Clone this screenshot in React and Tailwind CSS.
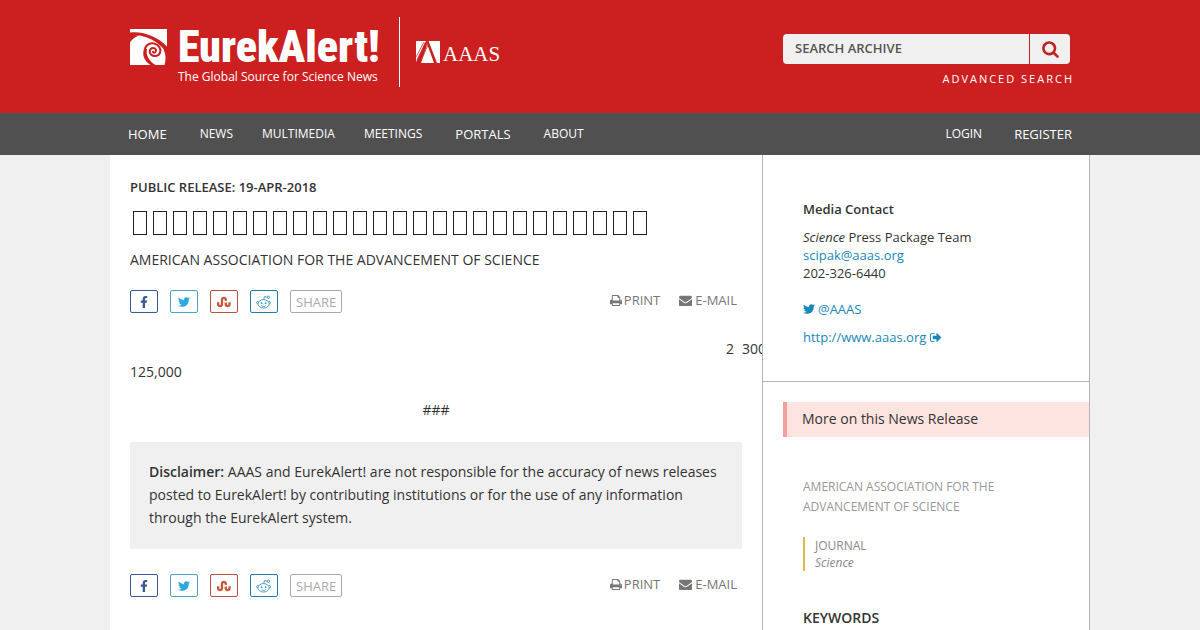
import React from 'react';
import { FaFacebookF, FaTwitter, FaStumbleupon } from 'react-icons/fa';

const navItems = [
  { label: 'HOME', className: 'text-[13px]' },
  { label: 'NEWS', className: 'mr-[-4px] text-[12px]' },
  { label: 'MULTIMEDIA', className: 'mr-[-4px] text-[12px]' },
  { label: 'MEETINGS', className: 'text-[12px]' },
  { label: 'PORTALS', className: 'text-[13px]' },
  { label: 'ABOUT', className: 'text-[12px]' },
];

// The headline is shown as a row of empty glyph boxes
const HEADLINE_LENGTH = 26;

function PrintIcon() {
  return (
    <svg viewBox="0 0 1664 1792" className="h-[13px] w-3" fill="currentColor" aria-hidden="true">
      <path fillRule="evenodd" d="M384 1536h896v-256h-896v256zM384 896h896v-384h-160q-40 0-68-28t-28-68v-160h-640v640zM1536 960q0-26-19-45t-45-19-45 19-19 45 19 45 45 19 45-19 19-45zM1664 960v416q0 13-9.5 22.5t-22.5 9.5h-224v160q0 40-28 68t-68 28h-960q-40 0-68-28t-28-68v-160h-224q-13 0-22.5-9.5t-9.500-22.500v-416q0-79 56.500-135.500t135.500-56.500h64v-544q0-40 28-68t68-28h672q40 0 88 20t76 48l152 152q28 28 48 76t20 88v256h64q79 0 135.500 56.500t56.500 135.500z" />
    </svg>
  );
}

function MailIcon() {
  return (
    <svg viewBox="0 0 1792 1792" className="h-[13px] w-[13px]" fill="currentColor" aria-hidden="true">
      <path d="M1792 710v794q0 66-47 113t-113 47h-1472q-66 0-113-47t-47-113v-794q44 49 101 87 362 246 497 345 57 42 92.5 65.5t94.5 48 110 24.5h2q51 0 110-24.5t94.5-48 92.5-65.5q170-123 498-345 57-39 100-87zM1792 416q0 79-49 151t-122 123q-376 261-468 325-10 7-42.5 31t-54 38.5-52 32.5-57.5 27-50 9h-2q-23 0-50-9t-57.5-27-52-32.5-54-38.5-42.5-31q-91-64-262-182.5t-205-142.5q-62-42-117-115.5t-55-136.5q0-78 41.5-130t118.5-52h1472q65 0 112.5 47t47.5 113z" />
    </svg>
  );
}

function SignOutIcon() {
  return (
    <svg viewBox="0 0 1664 1792" className="h-[13px] w-3" fill="currentColor" aria-hidden="true">
      <path d="M640 1440q0 4 1 20t.5 26.5-3 23.5-10 19.5-20.5 6.5h-320q-119 0-203.5-84.5t-84.5-203.5v-704q0-119 84.5-203.5t203.5-84.5h320q13 0 22.5 9.5t9.5 22.5q0 4 1 20t.5 26.5-3 23.5-10 19.5-20.5 6.5h-320q-66 0-113 47t-47 113v704q0 66 47 113t113 47h312l11.5 1 11.5 3 8 5.5 7 9 2 13.5zM1568 896q0 26-19 45l-544 544q-19 19-45 19t-45-19-19-45v-288h-448q-26 0-45-19t-19-45v-384q0-26 19-45t45-19h448v-288q0-26 19-45t45-19 45 19l544 544q19 19 19 45z" />
    </svg>
  );
}

function SearchIcon() {
  return (
    <svg viewBox="0 0 1664 1792" className="h-[18px] w-[17px]" fill="currentColor" aria-hidden="true">
      <path fillRule="evenodd" d="M1152 832q0-185-131.5-316.5t-316.5-131.5-316.5 131.5-131.5 316.5 131.5 316.5 316.5 131.5 316.5-131.5 131.5-316.5zM1664 1664q0 52-38 90t-90 38q-54 0-90-38l-343-342q-179 124-399 124-143 0-273.5-55.5t-225-150-150-225-55.5-273.5 55.5-273.5 150-225 225-150 273.5-55.5 273.5 55.5 225 150 150 225 55.5 273.5q0 220-124 399l343 343q37 37 37 90z" />
    </svg>
  );
}

function RedditIcon() {
  return (
    <svg viewBox="0 0 16 14" className="h-[14px] w-4" fill="none" stroke="currentColor" strokeWidth="0.9" aria-hidden="true">
      <ellipse cx="7.6" cy="8.8" rx="5.6" ry="4.2" />
      <path d="M2.6 6.9C1.8 5.9.6 6.6.7 7.7c0 .7.5 1.2 1.2 1.4M12.6 6.9c.8-1 2-.3 1.9.8 0 .7-.5 1.2-1.2 1.4" />
      <path d="M7.7 4.6l.8-3 2.7.6" />
      <circle cx="12.4" cy="2.3" r="1.2" />
      <path d="M5.4 10.7c1.2 1 3.2 1 4.4 0" />
      <circle cx="5.6" cy="8.2" r="0.9" fill="currentColor" stroke="none" />
      <circle cx="9.6" cy="8.2" r="0.9" fill="currentColor" stroke="none" />
    </svg>
  );
}

function Logo() {
  return (
    <div className="flex items-start pt-[17px] text-white">
      <svg viewBox="0 0 37 37" className="mt-[11px] h-[37px] w-[37px]" aria-hidden="true">
        <path fill="#fff" d="M0 1H37V37H0Z" />
        <path fill="#cc2020" d="M0 4.500C11 3 26 7 37 18.500V25C28 13 16 6.500 0 6.800ZM0 6.500L9 7.500C5 9 2 11 0 14.500Z" />
        <path fill="#cc2020" d="M37 22V37H34.500C36 32 36 27 34 22.500L33 19ZM14.500 20C11.500 26 14 33 20.500 37H25.500C19 33 15.500 27 17 21Z" />
        <path
          fill="none"
          stroke="#cc2020"
          strokeWidth="2"
          strokeLinecap="round"
          d="M15 24C14 18 19 14.500 24 15.500C29 16.500 31.500 21 30 25C28.500 28.500 23.500 29 21 26.500C18.500 24 20 20 23 20C26 20 27 23 25 24.500C24 25.200 23 24.500 23 23.800"
        />
      </svg>
      <div className="ml-[11px] w-[202px]">
        <div className="mt-[7px] font-['Roboto_Condensed','DejaVu_Sans_Condensed',sans-serif] text-[44px] leading-[46px] font-black">
          EurekAlert!
        </div>
        <div className="text-[12px] leading-[14px] whitespace-nowrap">The Global Source for Science News</div>
      </div>
      <div className="ml-[19px] h-[70px] w-px bg-white"></div>
      <div className="mt-[23px] ml-4 flex items-end gap-[2px]">
        <svg viewBox="0 0 25 23" className="h-[23px] w-[25px]" aria-hidden="true">
          <path fill="#fff" d="M0 1H10L0 22ZM10 1l8 22H5L11 5ZM12.5 1H24V23H21Z" />
          <path stroke="#cc2020" strokeWidth="0.7" d="M11 2L2 23M9.5 2L1 20M12 5L4 23M8 2L0 17" />
        </svg>
        <span className="font-['Liberation_Serif',serif] text-[21px] leading-[18px]">AAAS</span>
      </div>
    </div>
  );
}

function ShareBar() {
  const button = 'flex h-[23px] w-7 items-center justify-center rounded-xs border';
  return (
    <div className="flex items-start justify-between">
      <div className="flex items-center gap-3">
        <button className={`${button} border-[#3b5998] text-[#3b5998]`} aria-label="Facebook">
          <FaFacebookF className="h-3 w-3" />
        </button>
        <button className={`${button} border-[#4aa5c8] text-[#2ba9e0]`} aria-label="Twitter">
          <FaTwitter className="h-3 w-3" />
        </button>
        <button className={`${button} border-[#b9503c] text-[#cb5638]`} aria-label="StumbleUpon">
          <FaStumbleupon className="h-[14px] w-[14px]" />
        </button>
        <button className={`${button} border-[#1f7fa8] text-[#3a94bd]`} aria-label="Reddit">
          <RedditIcon />
        </button>
        <button className="h-[23px] rounded-xs border border-[#aaa] px-[5px] text-[13px] leading-5 text-[#aaa]">
          SHARE
        </button>
      </div>
      <div className="flex items-center gap-[19px] pr-[5px] text-[13px] leading-5 text-[#777]">
        <a href="#print" className="flex items-center gap-[2px]">
          <PrintIcon />
          PRINT
        </a>
        <a href="#email" className="flex items-center gap-[3px]">
          <MailIcon />
          E-MAIL
        </a>
      </div>
    </div>
  );
}

function Header() {
  return (
    <header className="bg-[#cc2020]">
      <div className="mx-auto flex h-[113px] max-w-[980px] justify-between px-5">
        <Logo />
        <div className="pt-[34px]">
          <form className="flex h-[30px] w-[287px] gap-px" onSubmit={(e) => e.preventDefault()}>
            <input
              type="text"
              aria-label="Search archive"
              placeholder="SEARCH ARCHIVE"
              className="min-w-0 flex-1 rounded-l-sm bg-[#f0f0f0] px-3 text-[13px] font-semibold text-[#555] placeholder:text-[#555]"
            />
            <button
              type="submit"
              aria-label="Search"
              className="flex w-10 items-center justify-center rounded-r-sm bg-[#f0f0f0] text-[#bf2222]"
            >
              <SearchIcon />
            </button>
          </form>
          <div className="-mr-1 mt-[7px] text-right text-[11px] leading-4 tracking-[2px] text-white">
            <a href="#advanced">ADVANCED SEARCH</a>
          </div>
        </div>
      </div>
    </header>
  );
}

function Nav() {
  return (
    <nav className="bg-[#505050] text-white">
      <div className="mx-auto flex h-[42px] max-w-[980px] items-center justify-between px-[18px] leading-5">
        <div className="flex gap-[33px]">
          {navItems.map((item) => (
            <a key={item.label} href="#nav" className={item.className}>
              {item.label}
            </a>
          ))}
        </div>
        <div className="flex gap-8">
          <a href="#login" className="text-[12px]">LOGIN</a>
          <a href="#register" className="text-[13px]">REGISTER</a>
        </div>
      </div>
    </nav>
  );
}

function Sidebar() {
  return (
    <aside className="w-[328px] shrink-0 border-x border-[#b5b5b5]">
      <div className="border-b border-[#b5b5b5] px-10 pt-[45px] pb-[35px] text-[13px] leading-[18px]">
        <h2 className="mb-[10px] font-semibold">Media Contact</h2>
        <p>
          <em>Science</em> Press Package Team
        </p>
        <p>
          <a href="#mail" className="text-[#1a87b9]">scipak@aaas.org</a>
        </p>
        <p>202-326-6440</p>
        <p className="mt-[18px] text-[#1a87b9]">
          <a href="#twitter" className="flex items-center gap-[3px]">
            <FaTwitter className="h-3 w-3" />
            @AAAS
          </a>
        </p>
        <p className="mt-[10px] text-[#1a87b9]">
          <a href="#aaas" className="flex items-center gap-1">
            http://www.aaas.org
            <SignOutIcon />
          </a>
        </p>
      </div>
      <h3 className="mt-5 ml-5 border-l-4 border-[#f2a09b] bg-[#fde4e0] pt-[5px] pb-[7px] pl-[15px] text-[14px] leading-[23px]">
        More on this News Release
      </h3>
      <div className="px-10 pt-10">
        <p className="text-[12px] leading-5 text-[#999]">AMERICAN ASSOCIATION FOR THE ADVANCEMENT OF SCIENCE</p>
        <div className="mt-5 border-l-2 border-[#e0b84c] pl-[10px] text-[12px] leading-[17px] text-[#888]">
          <p>JOURNAL</p>
          <p className="italic">Science</p>
        </div>
        <h4 className="mt-[35px] text-[14px] leading-[23px] font-semibold">KEYWORDS</h4>
      </div>
    </aside>
  );
}

function Article() {
  return (
    <main className="min-w-0 flex-1 overflow-hidden px-5 pt-[22px]">
      <p className="text-[13px] leading-5 font-semibold">PUBLIC RELEASE: 19-APR-2018</p>
      <h1 className="mt-[14px] flex gap-[6px] pl-[3px]">
        {Array.from({ length: HEADLINE_LENGTH }, (_, i) => (
          <span key={i} className="h-6 w-[14px] border border-[#222]"></span>
        ))}
      </h1>
      <p className="mt-[13px] text-[14px] leading-[23px]">AMERICAN ASSOCIATION FOR THE ADVANCEMENT OF SCIENCE</p>
      <div className="mt-[19px]">
        <ShareBar />
      </div>
      <div className="mt-6 text-[14px] leading-[23px]">
        <div className="-mr-6 flex justify-end gap-2">
          <span>2</span>
          <span>300</span>
        </div>
        <p>125,000</p>
        <p className="mt-[15px] text-center">###</p>
        <p className="mt-[21px] bg-[#f0f0f0] px-[19px] pt-[18px] pb-5">
          <strong className="font-semibold">Disclaimer:</strong> AAAS and EurekAlert! are not responsible for the
          accuracy of news releases posted to EurekAlert! by contributing institutions or for the use of any
          information through the EurekAlert system.
        </p>
      </div>
      <div className="mt-[25px]">
        <ShareBar />
      </div>
    </main>
  );
}

function App() {
  return (
    <div className="flex min-h-screen flex-col bg-[#f0f0f0] font-['Open_Sans',sans-serif] text-[#333]">
      <Header />
      <Nav />
      <div className="mx-auto flex w-full max-w-[980px] flex-1 bg-white">
        <Article />
        <Sidebar />
      </div>
    </div>
  );
}

export default App;
